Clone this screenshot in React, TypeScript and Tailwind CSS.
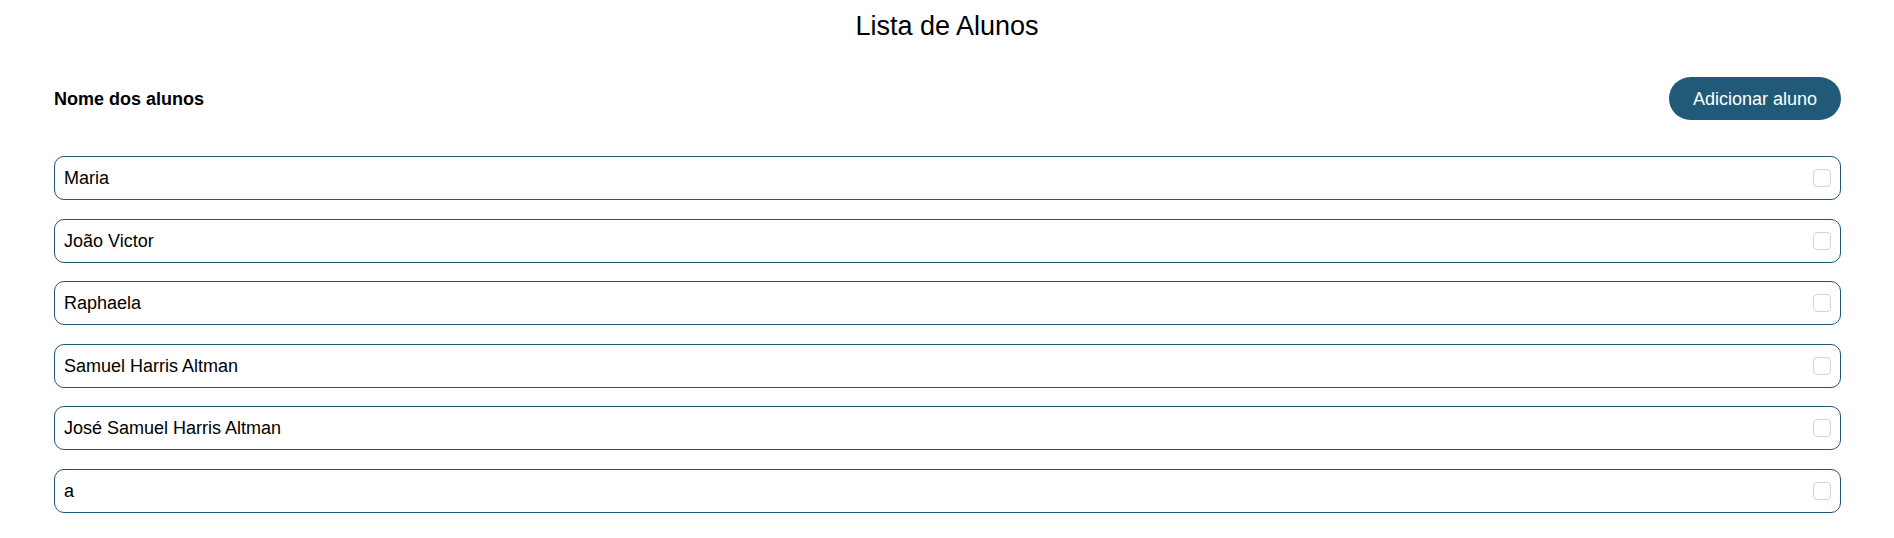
import React from "react";

const alunos = [
  "Maria",
  "João Victor",
  "Raphaela",
  "Samuel Harris Altman",
  "José Samuel Harris Altman",
  "a",
];

export default function App() {
  return (
    <div className="min-h-screen bg-white text-black font-['Liberation_Sans',Arial,sans-serif]">
      <h1 className="pt-[10px] text-center text-[27px] leading-[32px] font-normal">
        Lista de Alunos
      </h1>
      <div className="pl-[54px] pr-[53px]">
        <div className="mt-[35px] flex items-center justify-between">
          <span className="text-[18px] font-bold leading-[22px]">Nome dos alunos</span>
          <button className="h-[43px] rounded-full bg-[#215a78] px-[24px] text-[18px] leading-[22px] text-white">
            Adicionar aluno
          </button>
        </div>
        <ul className="mt-[36px] flex flex-col gap-[18.5px]">
          {alunos.map((nome) => (
            <li
              key={nome}
              className="flex h-[44px] items-center justify-between rounded-[10px] border border-[#1f5673] pl-[9px] pr-[9px]"
            >
              <span className="text-[18px] leading-[22px]">{nome}</span>
              <span className="h-[18px] w-[18px] rounded-[4px] border border-[#d4d4d4] bg-white" />
            </li>
          ))}
        </ul>
      </div>
    </div>
  );
}
